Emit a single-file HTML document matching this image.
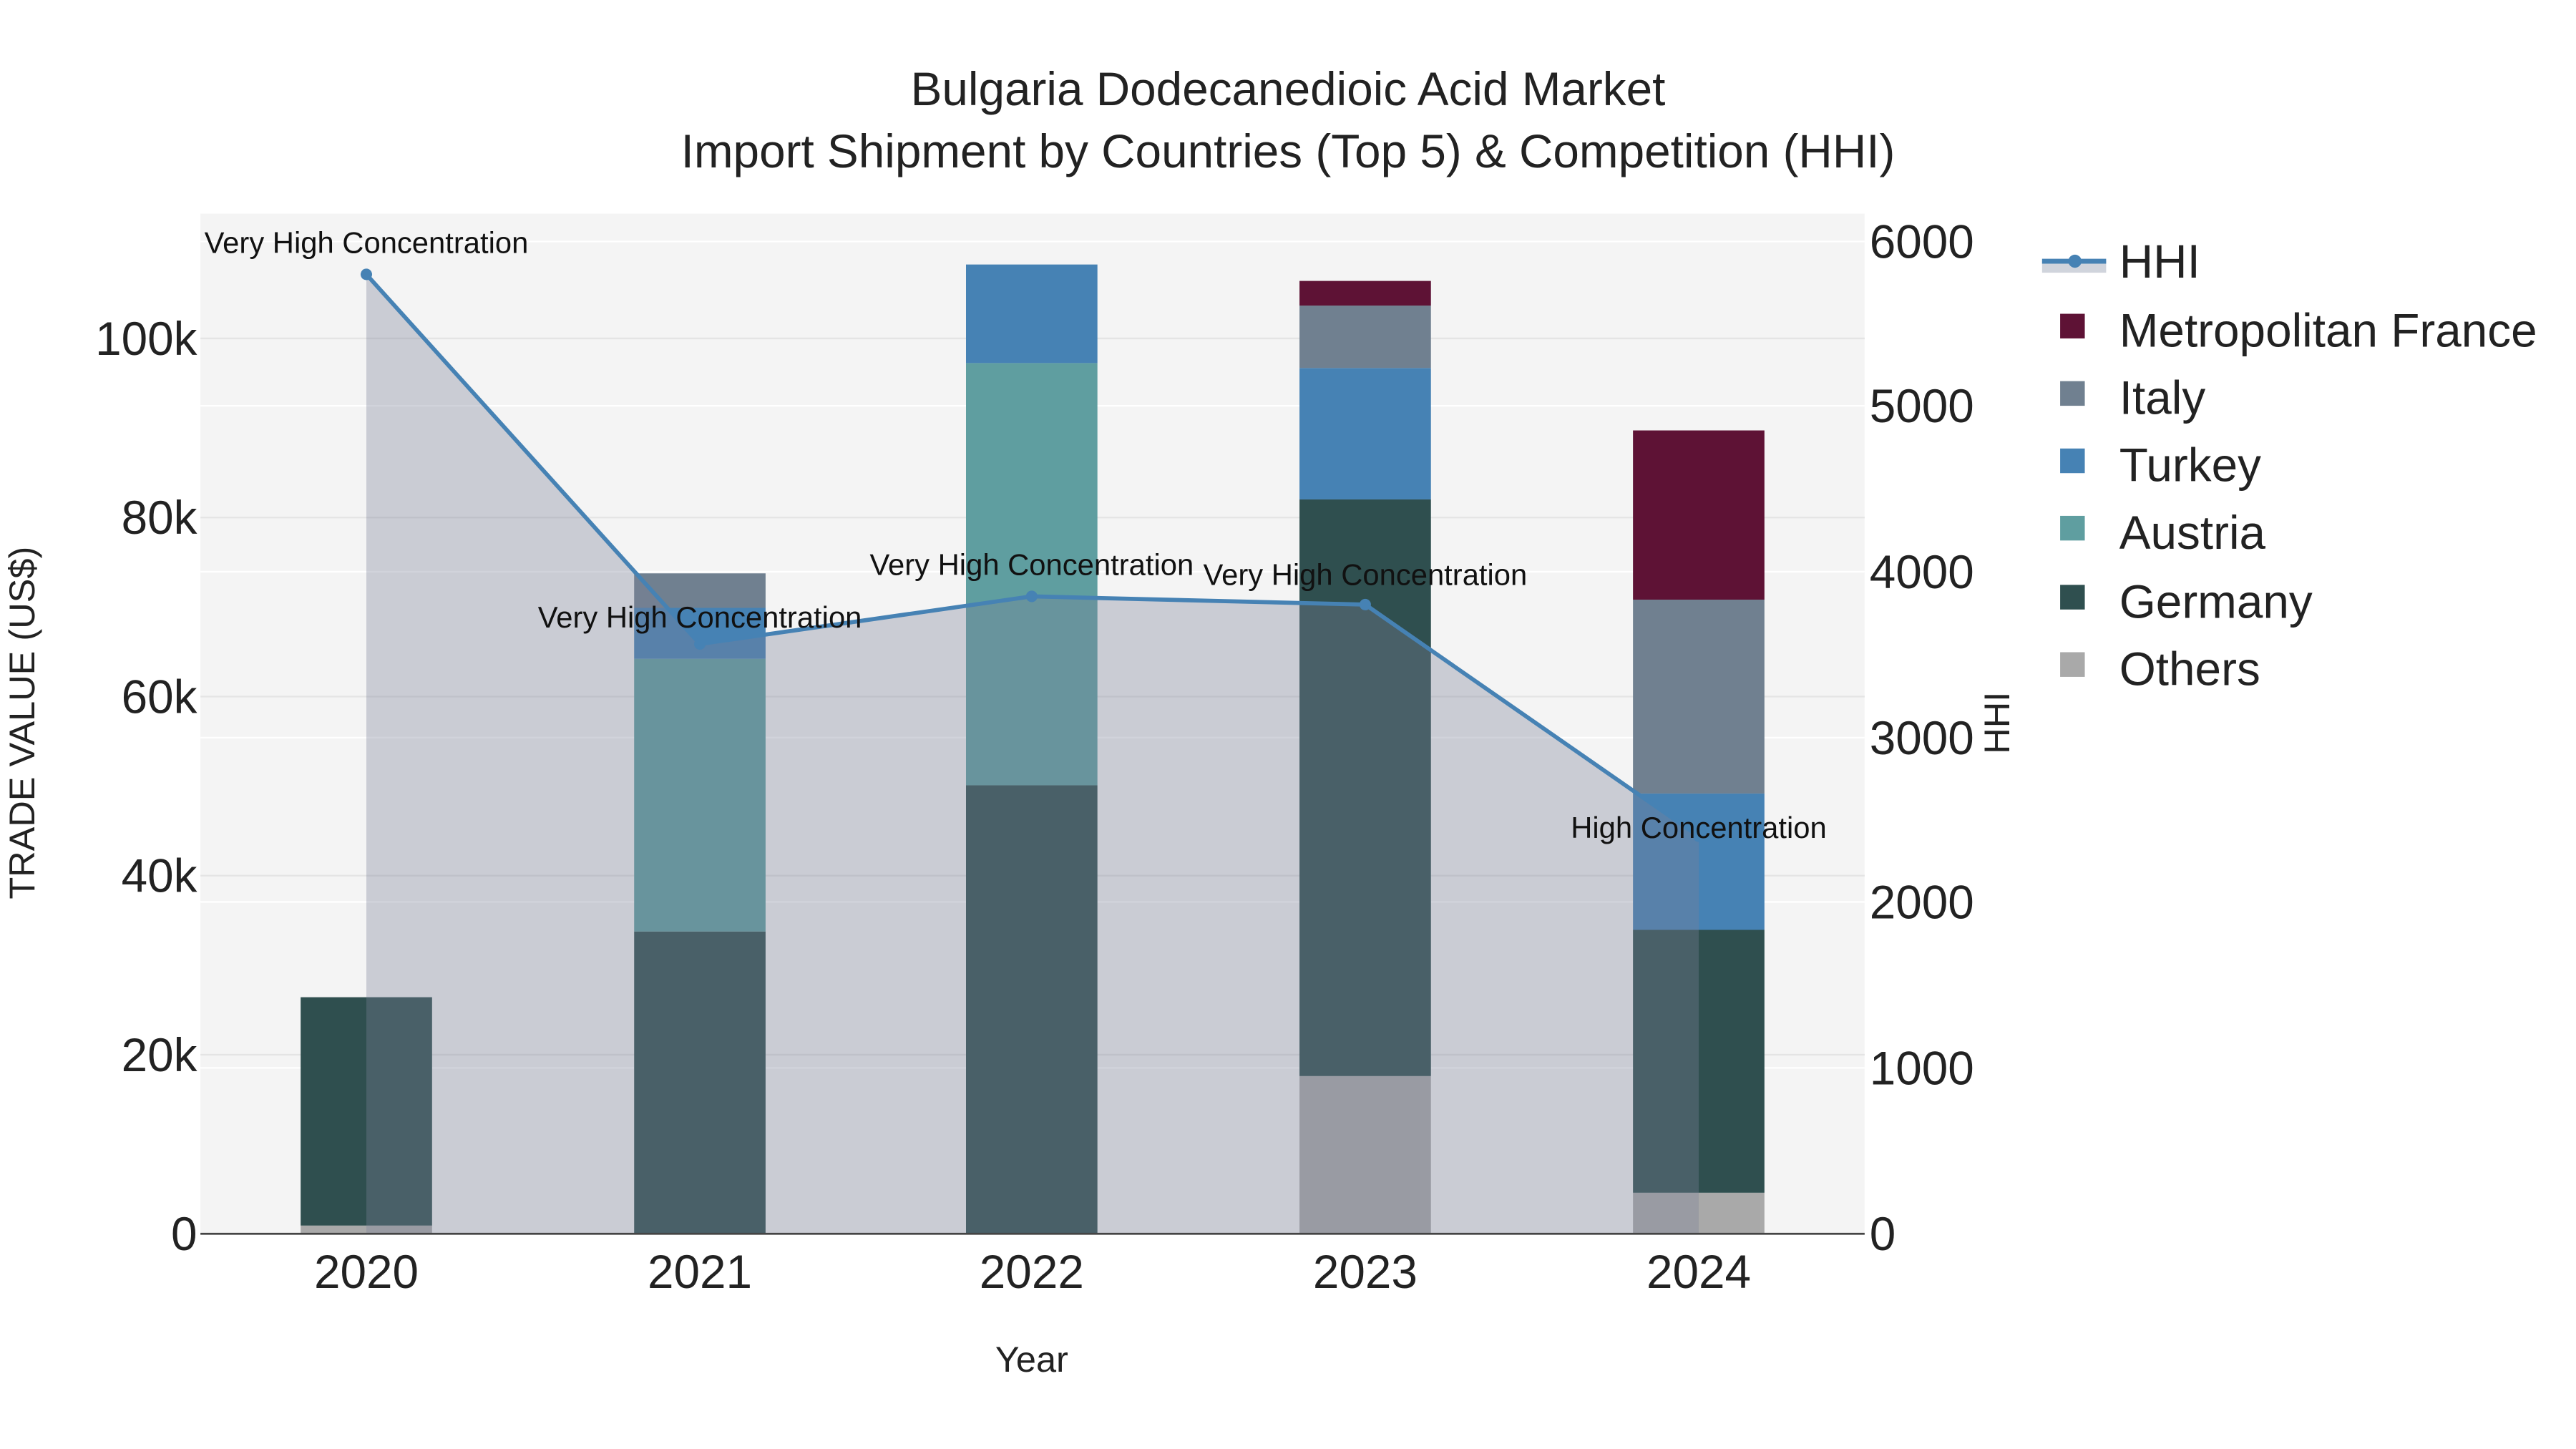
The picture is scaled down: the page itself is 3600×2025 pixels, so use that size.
<!DOCTYPE html>
<html><head><meta charset="utf-8"><style>html,body{margin:0;padding:0;background:#fff}svg{display:block}text{font-family:"Liberation Sans",sans-serif}</style></head>
<body>
<svg width="3600" height="2025" viewBox="0 0 1568 882" xmlns="http://www.w3.org/2000/svg">
<rect x="0" y="0" width="1568" height="882" fill="#fff"/>
<rect x="122" y="130" width="1013" height="621" fill="#f4f4f4"/>
<g stroke="#fff" stroke-width="1">
<line x1="122" x2="1135" y1="650" y2="650"/><line x1="122" x2="1135" y1="549" y2="549"/><line x1="122" x2="1135" y1="449" y2="449"/><line x1="122" x2="1135" y1="348" y2="348"/><line x1="122" x2="1135" y1="247" y2="247"/><line x1="122" x2="1135" y1="147" y2="147"/>
</g>
<g stroke="#e4e4e4" stroke-width="1">
<line x1="122" x2="1135" y1="642" y2="642"/><line x1="122" x2="1135" y1="533" y2="533"/><line x1="122" x2="1135" y1="424" y2="424"/><line x1="122" x2="1135" y1="315" y2="315"/><line x1="122" x2="1135" y1="206" y2="206"/>
</g>
<rect x="183" y="746" width="80" height="5" fill="#a9a9a9"/>
<rect x="183" y="607" width="80" height="139" fill="#2f4f4f"/>
<rect x="386" y="567" width="80" height="184" fill="#2f4f4f"/>
<rect x="386" y="401" width="80" height="166" fill="#5f9ea0"/>
<rect x="386" y="370" width="80" height="31" fill="#4682b4"/>
<rect x="386" y="349" width="80" height="21" fill="#708090"/>
<rect x="588" y="478" width="80" height="273" fill="#2f4f4f"/>
<rect x="588" y="221" width="80" height="257" fill="#5f9ea0"/>
<rect x="588" y="161" width="80" height="60" fill="#4682b4"/>
<rect x="791" y="655" width="80" height="96" fill="#a9a9a9"/>
<rect x="791" y="304" width="80" height="351" fill="#2f4f4f"/>
<rect x="791" y="224" width="80" height="80" fill="#4682b4"/>
<rect x="791" y="186" width="80" height="38" fill="#708090"/>
<rect x="791" y="171" width="80" height="15" fill="#5e1235"/>
<rect x="994" y="726" width="80" height="25" fill="#a9a9a9"/>
<rect x="994" y="566" width="80" height="160" fill="#2f4f4f"/>
<rect x="994" y="483" width="80" height="83" fill="#4682b4"/>
<rect x="994" y="365" width="80" height="118" fill="#708090"/>
<rect x="994" y="262" width="80" height="103" fill="#5e1235"/>
<polygon points="223,167 426,392 628,363 831,368 1034,509 1034,751 223,751" fill="#7a8298" fill-opacity="0.35"/>
<polyline points="223,167 426,392 628,363 831,368 1034,509" fill="none" stroke="#4682b4" stroke-width="2.5"/>
<g fill="#4682b4"><circle cx="223" cy="167" r="3.5"/><circle cx="426" cy="392" r="3.5"/><circle cx="628" cy="363" r="3.5"/><circle cx="831" cy="368" r="3.5"/><circle cx="1034" cy="509" r="3.5"/></g>
<line x1="122" x2="1135" y1="751" y2="751" stroke="#444" stroke-width="1.2"/>
<g font-size="18.2" text-anchor="middle" fill="#111">
<text x="223" y="154">Very High Concentration</text>
<text x="426" y="382">Very High Concentration</text>
<text x="628" y="350">Very High Concentration</text>
<text x="831" y="356">Very High Concentration</text>
<text x="1034" y="510">High Concentration</text>
</g>
<g font-size="28.6" text-anchor="middle" fill="#222">
<text x="784" y="64">Bulgaria Dodecanedioic Acid Market</text>
<text x="784" y="102">Import Shipment by Countries (Top 5) &amp; Competition (HHI)</text>
</g>
<g font-size="28.6" text-anchor="end" fill="#222">
<text x="120" y="761">0</text><text x="120" y="652">20k</text><text x="120" y="543">40k</text><text x="120" y="434">60k</text><text x="120" y="325">80k</text><text x="120" y="216">100k</text>
</g>
<g font-size="28.6" text-anchor="start" fill="#222">
<text x="1138" y="761">0</text><text x="1138" y="660">1000</text><text x="1138" y="559">2000</text><text x="1138" y="459">3000</text><text x="1138" y="358">4000</text><text x="1138" y="257">5000</text><text x="1138" y="157">6000</text>
</g>
<g font-size="28.6" text-anchor="middle" fill="#222">
<text x="223" y="784">2020</text><text x="426" y="784">2021</text><text x="628" y="784">2022</text><text x="831" y="784">2023</text><text x="1034" y="784">2024</text>
</g>
<text x="628" y="835" font-size="22" text-anchor="middle" fill="#222">Year</text>
<text transform="translate(21,440) rotate(-90)" font-size="22" text-anchor="middle" fill="#222">TRADE VALUE (US$)</text>
<text transform="translate(1223,440) rotate(-90)" font-size="22" text-anchor="middle" fill="#222">HHI</text>
<rect x="1243" y="159" width="39" height="7" fill="#d0d4dc"/>
<line x1="1243" x2="1282" y1="159" y2="159" stroke="#4682b4" stroke-width="3"/>
<circle cx="1263" cy="159" r="4" fill="#4682b4"/>
<g fill="#222" font-size="28.6">
<text x="1290" y="169">HHI</text>
<text x="1290" y="211">Metropolitan France</text>
<text x="1290" y="252">Italy</text>
<text x="1290" y="293">Turkey</text>
<text x="1290" y="334">Austria</text>
<text x="1290" y="376">Germany</text>
<text x="1290" y="417">Others</text>
</g>
<rect x="1254" y="191" width="15" height="15" fill="#5e1235"/>
<rect x="1254" y="232" width="15" height="15" fill="#708090"/>
<rect x="1254" y="273" width="15" height="15" fill="#4682b4"/>
<rect x="1254" y="314" width="15" height="15" fill="#5f9ea0"/>
<rect x="1254" y="356" width="15" height="15" fill="#2f4f4f"/>
<rect x="1254" y="397" width="15" height="15" fill="#a9a9a9"/>
</svg>
</body></html>
